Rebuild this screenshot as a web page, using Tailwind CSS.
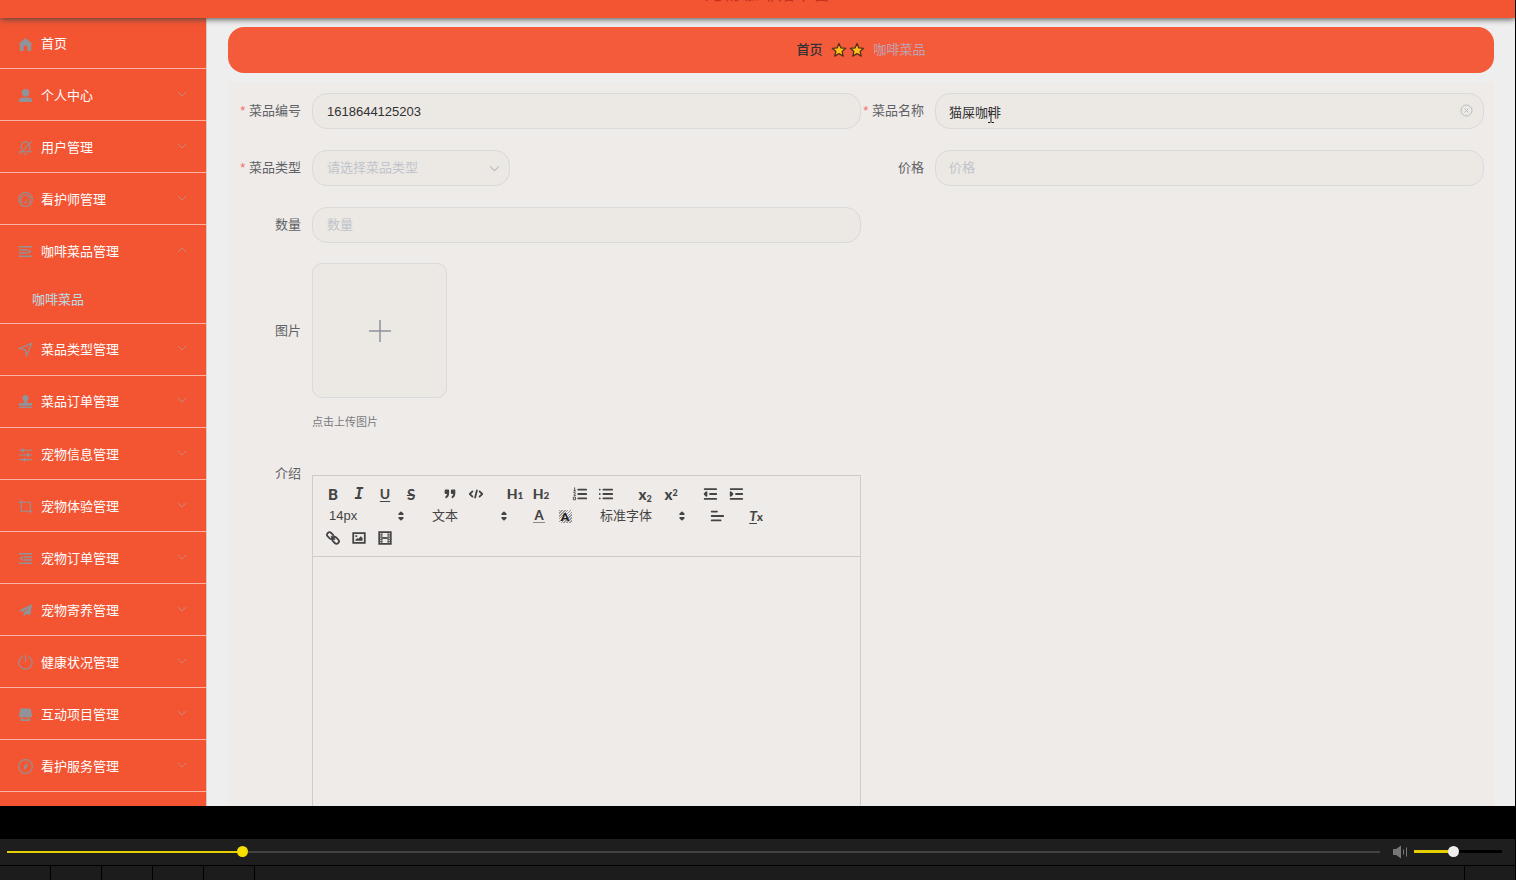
<!DOCTYPE html>
<html lang="zh-CN">

<head>
  <meta charset="UTF-8">
  <meta name="viewport" content="width=device-width, initial-scale=1.0">
  <title>咖啡菜品</title>
  <script src="https://cdn.jsdelivr.net/npm/@tailwindcss/browser@4"></script>
</head>

<body class="bg-black">
  <!-- shared icons -->
  <svg class="hidden">
    <symbol id="down" viewBox="0 0 10 6"><path d="M1 1l4 4 4-4" fill="none" stroke="currentColor" /></symbol>
    <symbol id="up" viewBox="0 0 10 6"><path d="M1 5l4-4 4 4" fill="none" stroke="currentColor" /></symbol>
    <symbol id="updown" viewBox="0 0 18 18">
      <path d="M7 11l2 2 2-2zM7 7l2-2 2 2z" fill="currentColor" stroke="currentColor" stroke-width="2" stroke-linejoin="round" />
    </symbol>
    <symbol id="star" viewBox="0 0 16 16">
      <path d="M8 1.5l1.9 4.4 4.8.4-3.6 3.1 1.1 4.7L8 11.6l-4.2 2.5 1.1-4.7L1.3 6.3l4.8-.4z" fill="#fcc21b" stroke="#54301c" stroke-width="1.3" stroke-linejoin="round" />
    </symbol>
  </svg>

  <div class="flex h-screen flex-col font-['Liberation_Sans','Noto_Sans_CJK_SC',sans-serif] text-[13px]">

    <div class="mr-px flex min-h-0 flex-1 flex-col overflow-hidden bg-[#eee]">
      <header class="relative z-10 flex h-[18px] shrink-0 items-end justify-center bg-[#f35533] pb-[14px] pl-5 text-lg leading-5 text-[#c8321e] shadow-[0_1px_6px_#444]">
        <h1>宠物咖啡馆平台</h1>
      </header>

      <div class="flex min-h-0 flex-1">
        <nav class="w-[207px] shrink-0 overflow-hidden border-r border-[#d8c8c4] bg-[#f35533] text-white">
          <ul>
            <li class="border-b border-[#f6b5a5]">
              <a href="#" class="flex h-[50px] items-center gap-2 pt-0.5 pl-[18px]">
                <svg class="size-[15px] text-[#909399]" viewBox="0 0 16 16" fill="currentColor"><path d="M8 1L.5 7.500h1.500V15h4v-4a2 2 0 0 1 4 0v4h4V7.500h1.500z" /></svg>
                首页
              </a>
            </li>
            <li class="border-b border-[#f6b5a5]">
              <a href="#" class="flex h-[51px] items-center gap-2 pt-0.5 pr-[19px] pl-[18px]">
                <svg class="size-[15px] text-[#909399]" viewBox="0 0 16 16" fill="currentColor"><circle cx="8" cy="5" r="4" /><path d="M1 15v-1.500c0-2 1.500-3.500 3.500-3.500h7c2 0 3.500 1.500 3.500 3.500V15z" /></svg>
                <span class="flex-1">个人中心</span>
                <svg class="mb-1 h-[6px] w-[10px] text-[#c08a7c]"><use href="#down" /></svg>
              </a>
            </li>
            <li class="border-b border-[#f6b5a5]">
              <a href="#" class="flex h-[51px] items-center gap-2 pt-0.5 pr-[19px] pl-[18px]">
                <svg class="size-[15px] text-[#909399]" viewBox="0 0 16 16" fill="none" stroke="currentColor" stroke-width="1.200"><path d="M3.500 10V6.500a4.500 4.500 0 0 1 9 0V12.500H5M1 12.500h14M8 1v1M6.500 15h3M1.500 15L14.500 1.500" /></svg>
                <span class="flex-1">用户管理</span>
                <svg class="mb-1 h-[6px] w-[10px] text-[#c08a7c]"><use href="#down" /></svg>
              </a>
            </li>
            <li class="border-b border-[#f6b5a5]">
              <a href="#" class="flex h-[51px] items-center gap-2 pt-0.5 pr-[19px] pl-[18px]">
                <svg class="size-[15px] text-[#909399]" viewBox="0 0 16 16" fill="none" stroke="currentColor" stroke-width="1.200"><circle cx="8" cy="8" r="7.300" /><path d="M4.500 12A5 5 0 1 1 11.500 12" /><path d="M7 12L9 6v6z" fill="currentColor" stroke="none" /></svg>
                <span class="flex-1">看护师管理</span>
                <svg class="mb-1 h-[6px] w-[10px] text-[#c08a7c]"><use href="#down" /></svg>
              </a>
            </li>
            <li class="border-b border-[#f6b5a5]">
              <a href="#" class="flex h-[51px] items-center gap-2 pt-0.5 pr-[19px] pl-[18px]">
                <svg class="size-[15px] text-[#909399]" viewBox="0 0 16 16" fill="none" stroke="currentColor" stroke-width="1.600"><path d="M1 3h14M1 6.500h9M1 9.500h9M1 13h14" /><path d="M11 5.500v5L14.500 8z" fill="currentColor" stroke="none" /></svg>
                <span class="flex-1">咖啡菜品管理</span>
                <svg class="mb-1 h-[6px] w-[10px] text-[#c08a7c]"><use href="#up" /></svg>
              </a>
              <ul>
                <li><a href="#" class="flex h-[47px] items-center pl-8 text-[#b9dde6]">咖啡菜品</a></li>
              </ul>
            </li>
            <li class="border-b border-[#f6b5a5]">
              <a href="#" class="flex h-[51px] items-center gap-2 pr-[19px] pl-[18px]">
                <svg class="size-[15px] text-[#909399]" viewBox="0 0 16 16" fill="none" stroke="currentColor" stroke-width="1.300"><path d="M14.500 1.500L9 14.500 8 8.500 1.500 7z" /></svg>
                <span class="flex-1">菜品类型管理</span>
                <svg class="mb-1 h-[6px] w-[10px] text-[#c08a7c]"><use href="#down" /></svg>
              </a>
            </li>
            <li class="border-b border-[#f6b5a5]">
              <a href="#" class="flex h-[51px] items-center gap-2 pr-[19px] pl-[18px]">
                <svg class="size-[15px] text-[#909399]" viewBox="0 0 16 16" fill="currentColor"><path d="M8 1a3.300 3.300 0 0 1 2 6l-.5 2.500H15V12.500H1V9.500h5.500L6 7a3.300 3.300 0 0 1 2-6zM1 13.500h14V15H1z" /></svg>
                <span class="flex-1">菜品订单管理</span>
                <svg class="mb-1 h-[6px] w-[10px] text-[#c08a7c]"><use href="#down" /></svg>
              </a>
            </li>
            <li class="border-b border-[#f6b5a5]">
              <a href="#" class="flex h-[51px] items-center gap-2 pt-0.5 pr-[19px] pl-[18px]">
                <svg class="size-[15px] text-[#909399]" viewBox="0 0 16 16" fill="none" stroke="currentColor" stroke-width="1.200"><path d="M1 3.500h14M1 8.500h14M1 13.500h14" /><path d="M5 1.500v4M10.500 6.500v4M7 11.500v4" stroke-width="2" /></svg>
                <span class="flex-1">宠物信息管理</span>
                <svg class="mb-1 h-[6px] w-[10px] text-[#c08a7c]"><use href="#down" /></svg>
              </a>
            </li>
            <li class="border-b border-[#f6b5a5]">
              <a href="#" class="flex h-[51px] items-center gap-2 pt-0.5 pr-[19px] pl-[18px]">
                <svg class="size-[15px] text-[#909399]" viewBox="0 0 16 16" fill="none" stroke="currentColor" stroke-width="1.200"><path d="M3.500 1v12H15.500M.5 3.500h12.500V15.500" /></svg>
                <span class="flex-1">宠物体验管理</span>
                <svg class="mb-1 h-[6px] w-[10px] text-[#c08a7c]"><use href="#down" /></svg>
              </a>
            </li>
            <li class="border-b border-[#f6b5a5]">
              <a href="#" class="flex h-[51px] items-center gap-2 pt-0.5 pr-[19px] pl-[18px]">
                <svg class="size-[15px] text-[#909399]" viewBox="0 0 16 16" fill="none" stroke="currentColor" stroke-width="1.600"><path d="M1 3h14M6 6.500h9M6 9.500h9M1 13h14" /><path d="M5 5.500v5L1.500 8z" fill="currentColor" stroke="none" /></svg>
                <span class="flex-1">宠物订单管理</span>
                <svg class="mb-1 h-[6px] w-[10px] text-[#c08a7c]"><use href="#down" /></svg>
              </a>
            </li>
            <li class="border-b border-[#f6b5a5]">
              <a href="#" class="flex h-[51px] items-center gap-2 pt-0.5 pr-[19px] pl-[18px]">
                <svg class="size-[15px] text-[#909399]" viewBox="0 0 16 16" fill="currentColor"><path d="M15 1L1 8l4 1.500L12 4 6 10.500V15l2.500-3.500L13 13z" /></svg>
                <span class="flex-1">宠物寄养管理</span>
                <svg class="mb-1 h-[6px] w-[10px] text-[#c08a7c]"><use href="#down" /></svg>
              </a>
            </li>
            <li class="border-b border-[#f6b5a5]">
              <a href="#" class="flex h-[51px] items-center gap-2 pt-0.5 pr-[19px] pl-[18px]">
                <svg class="size-[15px] text-[#909399]" viewBox="0 0 16 16" fill="none" stroke="currentColor" stroke-width="1.200"><path d="M5 1.700a7 7 0 1 0 6 0M8 0v7" /></svg>
                <span class="flex-1">健康状况管理</span>
                <svg class="mb-1 h-[6px] w-[10px] text-[#c08a7c]"><use href="#down" /></svg>
              </a>
            </li>
            <li class="border-b border-[#f6b5a5]">
              <a href="#" class="flex h-[51px] items-center gap-2 pt-0.5 pr-[19px] pl-[18px]">
                <svg class="size-[15px] text-[#909399]" viewBox="0 0 16 16" fill="currentColor"><path d="M2.500 1.500h11l1.500 8a1.700 1.700 0 0 1-2.500 1 1.700 1.700 0 0 1-3 0 1.700 1.700 0 0 1-3 0 1.700 1.700 0 0 1-3 0A1.700 1.700 0 0 1 1 9.500zM3 12h2v1h6v-1h2v3H3z" /></svg>
                <span class="flex-1">互动项目管理</span>
                <svg class="mb-1 h-[6px] w-[10px] text-[#c08a7c]"><use href="#down" /></svg>
              </a>
            </li>
            <li class="border-b border-[#f6b5a5]">
              <a href="#" class="flex h-[51px] items-center gap-2 pt-0.5 pr-[19px] pl-[18px]">
                <svg class="size-[15px] text-[#909399]" viewBox="0 0 16 16" fill="none" stroke="currentColor" stroke-width="1.200"><circle cx="8" cy="8" r="7.300" /><path d="M10.500 4L9.300 9 6 12l.8-5z" fill="currentColor" stroke="none" /></svg>
                <span class="flex-1">看护服务管理</span>
                <svg class="mb-1 h-[6px] w-[10px] text-[#c08a7c]"><use href="#down" /></svg>
              </a>
            </li>
            <li><a href="#" class="block h-[51px]"></a></li>
          </ul>
        </nav>

        <main class="flex min-w-0 flex-1 flex-col overflow-hidden px-[21px] pt-[9px]">
          <div class="flex h-[46px] shrink-0 items-center justify-center rounded-2xl bg-[#f45b3a]">
            <a href="#" class="mr-2 font-medium text-[#303133]">首页</a>
            <svg class="mr-0.5 size-4"><use href="#star" /></svg>
            <svg class="mr-[9px] size-4"><use href="#star" /></svg>
            <span class="text-[#c0a4b4]">咖啡菜品</span>
          </div>

          <form class="mt-[9px] flex-1 bg-[#efebe8] px-[10px] pt-[11px] text-[#606266]">
            <div class="grid grid-cols-2 gap-y-[21px]">
              <div class="flex h-9 items-center">
                <label for="code" class="w-[74px] shrink-0 pr-[11px] text-right whitespace-nowrap"><span class="text-[#f56c6c]">*</span> 菜品编号</label>
                <input id="code" type="text" value="1618644125203" class="h-9 min-w-0 flex-1 rounded-[15px] border border-[#d8dadc] bg-[#ece8e3] px-[14px] text-[#303133]">
              </div>
              <div class="relative flex h-9 items-center">
                <label for="name" class="w-[74px] shrink-0 pr-[11px] text-right whitespace-nowrap"><span class="text-[#f56c6c]">*</span> 菜品名称</label>
                <input id="name" type="text" value="猫屎咖啡" class="h-9 min-w-0 flex-1 rounded-[15px] border border-[#d8dadc] bg-[#ece8e3] px-[13px] text-[#303133]">
                <button type="button" aria-label="清空" class="absolute top-[11px] right-[11px] text-[#b8bcc4]">
                  <svg class="size-[13px]" viewBox="0 0 13 13" fill="none" stroke="currentColor"><circle cx="6.500" cy="6.500" r="5.500" /><path d="M4.500 4.500l4 4M8.500 4.500l-4 4" /></svg>
                </button>
                <!-- text pointer -->
                <svg class="absolute top-[18px] left-[126px] h-3 w-2" viewBox="0 0 8 12" fill="none" stroke="#222"><path d="M1 .5h2.500M4.500 .5H7M4 1v10M1 11.500h2.500M4.500 11.500H7" /></svg>
              </div>
              <div class="flex h-9 items-center">
                <label for="type" class="w-[74px] shrink-0 pr-[11px] text-right whitespace-nowrap"><span class="text-[#f56c6c]">*</span> 菜品类型</label>
                <div class="relative w-[198px]">
                  <select id="type" class="h-9 w-full appearance-none rounded-[15px] border border-[#d8dadc] bg-[#ece8e3] px-[14px] text-[#c0c4cc]">
                    <option>请选择菜品类型</option>
                  </select>
                  <svg class="pointer-events-none absolute top-[15px] right-[10px] h-[7px] w-[11px] text-[#b8bcc4]"><use href="#down" /></svg>
                </div>
              </div>
              <div class="flex h-9 items-center">
                <label for="price" class="w-[74px] shrink-0 pr-[11px] text-right">价格</label>
                <input id="price" type="text" placeholder="价格" class="h-9 min-w-0 flex-1 rounded-[15px] border border-[#d8dadc] bg-[#ece8e3] px-[13px] pb-0.5 placeholder:text-[#c0c4cc]">
              </div>
              <div class="flex h-9 items-center">
                <label for="count" class="w-[74px] shrink-0 pr-[11px] text-right">数量</label>
                <input id="count" type="text" placeholder="数量" class="h-9 min-w-0 flex-1 rounded-[15px] border border-[#d8dadc] bg-[#ece8e3] px-[14px] pb-0.5 placeholder:text-[#c0c4cc]">
              </div>
            </div>

            <div class="mt-5 flex">
              <span class="flex h-[135px] w-[74px] shrink-0 items-center justify-end pr-[11px]">图片</span>
              <div>
                <button type="button" aria-label="上传图片" class="flex size-[135px] items-center justify-center rounded-[10px] border border-[#d8dadc] bg-[#ece8e3] text-[#8c939d]">
                  <svg class="size-[22px]" viewBox="0 0 22 22" stroke="currentColor" stroke-width="1.500"><path d="M11 0v22M0 11h22" /></svg>
                </button>
                <p class="mt-3 h-6 text-[11px] leading-6 text-[#777a80]">点击上传图片</p>
              </div>
            </div>

            <div class="mt-[22px] grid grid-cols-2">
              <div class="flex">
                <span class="flex h-9 w-[74px] shrink-0 items-center justify-end pr-[11px]">介绍</span>
                <div class="mt-[19px] min-w-0 flex-1 border border-[#ccc]">
                  <div class="border-b border-[#ccc] py-[7px] pl-[7px] text-[#444]">
                    <div class="flex gap-[13px]">
                      <div class="flex">
                        <button type="button" class="h-[22px] w-[26px] font-['Lato'] text-[15px] leading-[22px] font-black">B</button>
                        <button type="button" class="h-[22px] w-[26px] font-['DejaVu_Sans_Mono'] text-[15px] leading-[22px] font-bold italic">I</button>
                        <button type="button" class="h-[22px] w-[26px] font-['Lato'] text-[14px] leading-[22px] font-bold underline decoration-1 underline-offset-2">U</button>
                        <button type="button" class="h-[22px] w-[26px] font-['Lato'] text-[15px] leading-[22px] font-bold line-through decoration-1">S</button>
                      </div>
                      <div class="flex">
                        <button type="button" aria-label="引用" class="flex h-[22px] w-[26px] items-center justify-center">
                          <svg class="size-4" viewBox="0 0 18 18" fill="currentColor" stroke="currentColor" stroke-width="2" stroke-linejoin="round"><path d="M4 5h3v3H4zM11 5h3v3h-3zM7 8c0 4-3 5-3 5M14 8c0 4-3 5-3 5" /></svg>
                        </button>
                        <button type="button" aria-label="代码" class="flex h-[22px] w-[26px] items-center justify-center">
                          <svg class="size-4" viewBox="0 0 18 18" fill="none" stroke="currentColor" stroke-width="2" stroke-linecap="round" stroke-linejoin="round"><path d="M5 6L2 9l3 3M13 6l3 3-3 3M10 5L8 13" /></svg>
                        </button>
                      </div>
                      <div class="flex">
                        <button type="button" class="h-[22px] w-[26px] font-['Lato'] text-[14px] leading-[22px] font-black">H<span class="text-[10px]">1</span></button>
                        <button type="button" class="h-[22px] w-[26px] font-['Lato'] text-[14px] leading-[22px] font-black">H<span class="text-[10px]">2</span></button>
                      </div>
                      <div class="flex">
                        <button type="button" aria-label="编号列表" class="flex h-[22px] w-[26px] items-center justify-center">
                          <svg class="size-4" viewBox="0 0 18 18" stroke="currentColor" stroke-width="2" stroke-linecap="round"><path d="M7 4h9M7 9h9M7 14h9" /><path d="M3 2v3.500M2 5.500h2M2 7.500h1.500v1.500L2 10.500h2M2 12.500h2v3H2z" fill="none" stroke-width="1" /></svg>
                        </button>
                        <button type="button" aria-label="列表" class="flex h-[22px] w-[26px] items-center justify-center">
                          <svg class="size-4" viewBox="0 0 18 18" stroke="currentColor" stroke-width="2" stroke-linecap="round"><path d="M6 4h10M6 9h10M6 14h10M2 4h0M2 9h0M2 14h0" /></svg>
                        </button>
                      </div>
                      <div class="flex">
                        <button type="button" class="h-[22px] w-[26px] font-['Lato'] text-[15px] leading-[20px] font-black">x<sub class="text-[9px]">2</sub></button>
                        <button type="button" class="h-[22px] w-[26px] font-['Lato'] text-[15px] leading-[20px] font-black">x<sup class="text-[9px]">2</sup></button>
                      </div>
                      <div class="flex">
                        <button type="button" aria-label="减少缩进" class="flex h-[22px] w-[26px] items-center justify-center">
                          <svg class="size-4" viewBox="0 0 18 18" stroke="currentColor" stroke-width="2" stroke-linecap="round" stroke-linejoin="round"><path d="M3 3.500h13M9 9h7M3 14.500h13" /><path d="M5 7v4L3 9z" fill="currentColor" /></svg>
                        </button>
                        <button type="button" aria-label="增加缩进" class="flex h-[22px] w-[26px] items-center justify-center">
                          <svg class="size-4" viewBox="0 0 18 18" stroke="currentColor" stroke-width="2" stroke-linecap="round" stroke-linejoin="round"><path d="M3 3.500h13M9 9h7M3 14.500h13" /><path d="M3 7v4l2-2z" fill="currentColor" /></svg>
                        </button>
                      </div>
                    </div>
                    <div class="flex gap-[13px]">
                      <div class="relative w-[90px]">
                        <select aria-label="字号" class="h-[22px] w-full appearance-none pl-[9px]"><option>14px</option></select>
                        <svg class="pointer-events-none absolute top-[3px] right-px size-4"><use href="#updown" /></svg>
                      </div>
                      <div class="relative w-[90px]">
                        <select aria-label="标题" class="h-[22px] w-full appearance-none pl-[9px]"><option>文本</option></select>
                        <svg class="pointer-events-none absolute top-[3px] right-px size-4"><use href="#updown" /></svg>
                      </div>
                      <div class="flex">
                        <button type="button" class="flex h-[22px] w-[26px] items-center justify-center font-['Lato'] text-[13px] font-black"><span class="w-3 border-b border-[#888] leading-[13px]">A</span></button>
                        <button type="button" class="flex h-[22px] w-[26px] items-center justify-center font-['Lato'] text-[12px] font-black text-[#222]"><span class="size-[13px] bg-[repeating-linear-gradient(135deg,#999_0px,#999_1px,transparent_1px,transparent_2px)] leading-[13px]">A</span></button>
                      </div>
                      <div class="relative w-[100px]">
                        <select aria-label="字体" class="h-[22px] w-full appearance-none pl-[9px]"><option>标准字体</option></select>
                        <svg class="pointer-events-none absolute top-[3px] right-px size-4"><use href="#updown" /></svg>
                      </div>
                      <button type="button" aria-label="对齐" class="flex h-[22px] w-[26px] items-center justify-center">
                        <svg class="size-4" viewBox="0 0 18 18" stroke="currentColor" stroke-width="2" stroke-linecap="round"><path d="M3 4h6M3 9h13M3 14h10" /></svg>
                      </button>
                      <button type="button" class="h-[22px] w-[26px] font-['Lato'] text-[14px] leading-[22px] font-bold"><i class="underline decoration-1 underline-offset-2">T</i><span class="text-[11px] font-black">x</span></button>
                    </div>
                    <div class="flex">
                      <button type="button" aria-label="链接" class="flex h-[22px] w-[26px] items-center justify-center">
                        <svg class="size-4" viewBox="0 0 18 18" fill="none" stroke="currentColor" stroke-width="2"><path d="M7 7l4 4" /><rect x="2" y="3.500" width="8" height="5.500" rx="2.700" transform="rotate(45 6 6.200)" /><rect x="8" y="9" width="8" height="5.500" rx="2.700" transform="rotate(45 12 11.800)" /></svg>
                      </button>
                      <button type="button" aria-label="图片" class="flex h-[22px] w-[26px] items-center justify-center">
                        <svg class="size-4" viewBox="0 0 18 18" fill="none" stroke="currentColor" stroke-width="2"><path d="M2.500 3.500h13v11h-13z" /><path d="M5 12v-1l2-2 1 1 3-3 2 2v3zM5 6h2v2H5z" fill="currentColor" stroke="none" /></svg>
                      </button>
                      <button type="button" aria-label="视频" class="flex h-[22px] w-[26px] items-center justify-center">
                        <svg class="size-4" viewBox="0 0 18 18" fill="none" stroke="currentColor" stroke-width="2"><path d="M2.500 2.500h13v13h-13z" /><path d="M5.500 3v12M12.500 3v12M3 5.500h3M3 8h3M3 10.500h3M3 13h3M12 5.500h3M12 8h3M12 10.500h3M12 13h3" stroke-width="1" /><path d="M6 9h6" /></svg>
                      </button>
                    </div>
                  </div>
                  <div contenteditable="true" aria-label="介绍" class="min-h-[400px] px-4 py-3"></div>
                </div>
              </div>
            </div>
          </form>
        </main>
      </div>
    </div>

    <!-- video player controls -->
    <div class="mt-[33px] mr-px flex h-[26px] shrink-0 items-center bg-[#1e1e1e] pr-[13px] pb-px pl-[7px]">
      <input type="range" aria-label="播放进度" min="0" max="1000" value="169" class="h-[11px] min-w-0 flex-1 appearance-none bg-[linear-gradient(90deg,#e6cf00_17%,#444_17%)] bg-[length:100%_2px] bg-center bg-no-repeat [&::-webkit-slider-thumb]:size-[11px] [&::-webkit-slider-thumb]:appearance-none [&::-webkit-slider-thumb]:rounded-full [&::-webkit-slider-thumb]:bg-[#f7e000]">
      <button type="button" aria-label="音量" class="mr-1.5 ml-3">
        <svg class="h-[14px] w-4" viewBox="0 0 16 14" fill="#777"><path d="M1 4h3l5-3.500v13L4 10H1z" /><path d="M11 4.500h1v5h-1zM14 2.500h1v9h-1z" /></svg>
      </button>
      <input type="range" aria-label="音量大小" min="0" max="1000" value="440" class="h-[11px] w-[88px] appearance-none bg-[linear-gradient(90deg,#e6cf00_44%,#000_44%)] bg-[length:100%_3px] bg-center bg-no-repeat [&::-webkit-slider-thumb]:size-[11px] [&::-webkit-slider-thumb]:appearance-none [&::-webkit-slider-thumb]:rounded-full [&::-webkit-slider-thumb]:bg-[#eee]">
    </div>
    <div class="mt-px mr-px flex h-[14px] shrink-0 bg-[#1c1c1c]">
      <div class="w-[51px] border-r border-black"></div>
      <div class="w-[51px] border-r border-black"></div>
      <div class="w-[51px] border-r border-black"></div>
      <div class="w-[51px] border-r border-black"></div>
      <div class="w-[51px] border-r border-black"></div>
      <div class="flex-1"></div>
      <div class="w-[51px] border-l border-black"></div>
    </div>
  </div>
</body>

</html>
